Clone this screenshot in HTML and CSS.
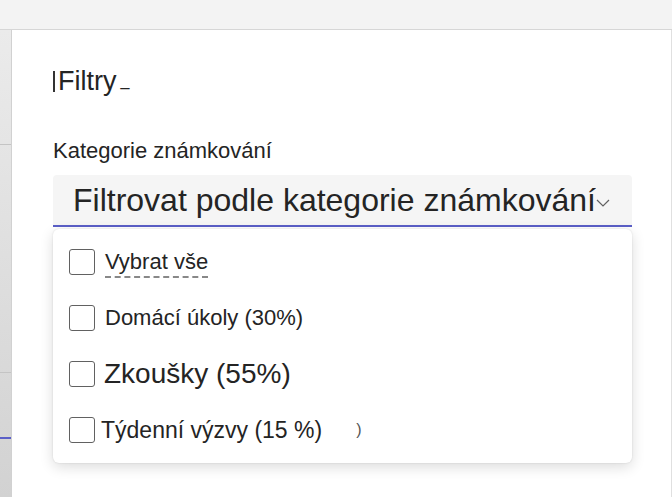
FILE: index.html
```html
<!DOCTYPE html>
<html lang="cs">
<head>
  <meta charset="UTF-8" />
  <meta name="viewport" content="width=device-width, initial-scale=1.0" />
  <title>Filtry</title>
  <link rel="stylesheet" href="styles.css">
</head>
<body>
  <div class="top-bar"></div>
  <div class="main">
    <div class="side-strip">
      <div class="strip-line first"></div>
      <div class="strip-line second"></div>
      <div class="strip-accent"></div>
    </div>
    <div class="panel">
      <h2 class="panel-title"><span class="caret"></span>Filtry<span class="trail">_</span></h2>
      <label class="field-label" for="category">Kategorie známkování</label>
      <div class="select-box" id="category">
        <span class="select-text">Filtrovat podle kategorie známkování</span>
        <svg class="chevron" width="14" height="10" viewBox="0 0 14 10">
          <path d="M1 2 L7 8 L13 2" fill="none" stroke="#616161" stroke-width="1.2" />
        </svg>
      </div>
      <div class="dropdown">
        <div class="option opt-all">
          <span class="check"></span>
          <span class="option-label dotted">Vybrat vše</span>
        </div>
        <div class="option opt-home">
          <span class="check"></span>
          <span class="option-label">Domácí úkoly (30%)</span>
        </div>
        <div class="option opt-exam">
          <span class="check"></span>
          <span class="option-label">Zkoušky (55%)</span>
        </div>
        <div class="option opt-week">
          <span class="check"></span>
          <span class="option-label">Týdenní výzvy (15 %)</span>
          <span class="stray">)</span>
        </div>
      </div>
    </div>
    <div class="edge"></div>
  </div>
</body>
</html>
```

FILE: styles.css
```css
html, body {
  height: 100%;
}
body {
  margin: 0;
  font-family: "Liberation Sans", Arial, sans-serif;
  color: #242424;
  background: #f3f3f3;
  display: flex;
  flex-direction: column;
  overflow: hidden;
}
.top-bar {
  height: 29px;
  flex: none;
  background: #f3f3f3;
  border-bottom: 1px solid #d6d6d6;
}
.main {
  flex: 1;
  display: flex;
}
.side-strip {
  width: 11px;
  flex: none;
  background: linear-gradient(to bottom, #ebebeb, #d2d2d2);
  display: flex;
  flex-direction: column;
}
.strip-line {
  height: 1px;
  background: #c4c4c4;
}
.strip-line.first {
  margin-top: 114px;
}
.strip-line.second {
  margin-top: 227px;
}
.strip-accent {
  margin-top: 64px;
  height: 2px;
  background: #5b5fc7;
}
.panel {
  flex: 1;
  background: #fff;
  border-left: 1px solid #d1d1d1;
  padding: 36px 39px 0 41px;
}
.edge {
  width: 1px;
  flex: none;
  border-left: 1px solid #e0e0e0;
  background: #5fb3b3;
}
.panel-title {
  margin: 0;
  font-size: 27px;
  font-weight: normal;
  line-height: 30px;
  display: flex;
  align-items: center;
}
.caret {
  width: 2px;
  height: 21px;
  background: #333;
  margin-right: 3px;
}
.trail {
  font-size: 16px;
  margin-left: 4px;
}
.field-label {
  display: block;
  margin-top: 42px;
  font-size: 22px;
  line-height: 26px;
}
.select-box {
  margin-top: 11px;
  height: 50px;
  background: #f5f5f5;
  border-radius: 4px 4px 0 0;
  border-bottom: 2px solid #5b5fc7;
  display: flex;
  align-items: center;
  padding: 0 22px 0 20px;
}
.select-text {
  flex: 1;
  font-size: 32px;
  white-space: nowrap;
  overflow: hidden;
}
.chevron {
  margin-top: 6px;
}
.dropdown {
  margin-top: 2px;
  background: #fff;
  border-radius: 6px;
  box-shadow: 0 4px 14px rgba(0, 0, 0, 0.14), 0 0 2px rgba(0, 0, 0, 0.12);
  padding: 20px 16px 20px;
}
.option {
  display: flex;
  align-items: center;
  height: 26px;
}
.option + .option {
  margin-top: 30px;
}
.check {
  width: 24px;
  height: 24px;
  border: 1px solid #616161;
  border-radius: 3px;
  flex: none;
}
.option-label {
  font-size: 22px;
  margin-left: 10px;
}
.dotted {
  text-decoration: underline dashed #888;
  text-underline-offset: 7px;
}
.opt-exam .option-label {
  font-size: 28px;
  margin-left: 9px;
}
.opt-week .option-label {
  font-size: 23px;
  margin-left: 6px;
}
.stray {
  margin-left: 34px;
  font-size: 16px;
  color: #555;
}
```
